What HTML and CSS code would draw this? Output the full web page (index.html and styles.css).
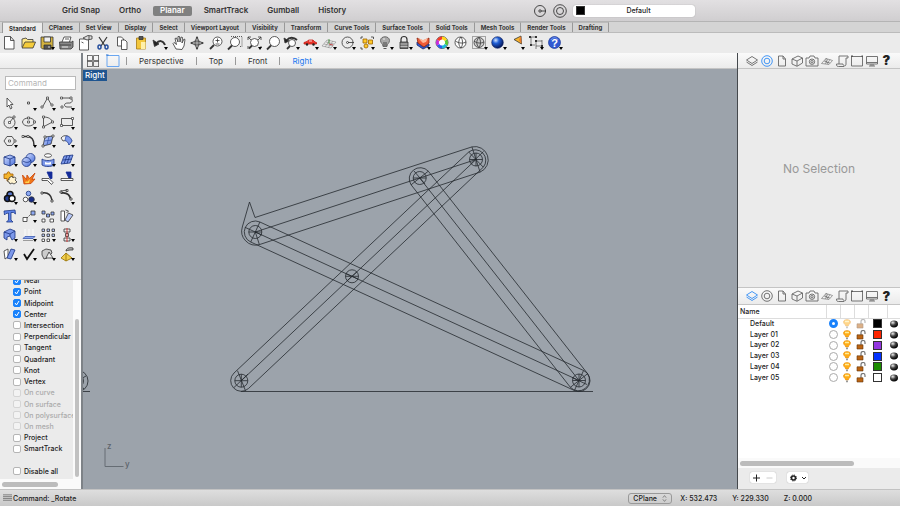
FILE: index.html
```html
<!DOCTYPE html>
<html lang="en">

<head>
    <meta charset="UTF-8">
    <meta name="viewport" content="width=device-width, initial-scale=1.0">
    <title>Right</title>
    <link rel="stylesheet" href="styles.css">
</head>

<body>
    <!-- shared icons -->
    <svg class="sprite" aria-hidden="true">
        <defs>
            <linearGradient id="blue" x1="0" y1="0" x2="1" y2="1">
                <stop offset="0" stop-color="#d3dfff" />
                <stop offset="1" stop-color="#4a70dc" />
            </linearGradient>
            <radialGradient id="ball" cx=".35" cy=".3" r=".7">
                <stop offset="0" stop-color="#d5e6ff" />
                <stop offset=".4" stop-color="#2160d8" />
                <stop offset="1" stop-color="#06195c" />
            </radialGradient>
            <radialGradient id="black" cx=".35" cy=".3" r=".7">
                <stop offset="0" stop-color="#eee" />
                <stop offset=".5" stop-color="#444" />
                <stop offset="1" stop-color="#000" />
            </radialGradient>
        </defs>
        <symbol id="layers" viewBox="0 0 14 14">
            <path d="M1.500 6L7 2.500 12.500 6 7 9.500z M1.500 8L7 11.500 12.500 8" />
        </symbol>
        <symbol id="rings" viewBox="0 0 14 14">
            <circle cx="7" cy="7" r="5.300" />
            <circle cx="7" cy="7" r="2.800" />
        </symbol>
        <symbol id="page" viewBox="0 0 14 14">
            <path d="M3.500 2h4.500l2.500 3v7h-7z M8 2v3h2.500" />
        </symbol>
        <symbol id="cube" viewBox="0 0 14 14">
            <path d="M2 5l6-3 4.500 2v5L7 12.300 2 10z M2 5l5 2 5.500-3 M7 7v5" />
        </symbol>
        <symbol id="camera" viewBox="0 0 14 14">
            <path d="M1 4h3l1-2h4l1 2h3v8H1z" />
            <circle cx="7" cy="7.700" r="2.700" />
            <circle cx="7" cy="7.700" r="1.200" />
        </symbol>
        <symbol id="plane" viewBox="0 0 14 14">
            <path d="M1.500 9.500L6 4.500l6.500 2L9 10.500z M4 7l6 2 M8 5l-3 5 M10 5.500L7 10 M6 4v4l3 1" stroke-width=".6" />
        </symbol>
        <symbol id="scroll" viewBox="0 0 14 14">
            <path d="M4 10V2h9v2h-2v6c0 3-3 2-3 0H1.500c0 2 .5 2.500 2 2.500H9" />
        </symbol>
        <symbol id="frame" viewBox="0 0 14 14">
            <path d="M1.500 2.500h11v9.500h-11z" />
            <path d="M1 1.500h2v1.500H1z M11.500 1.500H13v1.500h-1.500z" fill="#555" stroke="none" />
        </symbol>
        <symbol id="monitor" viewBox="0 0 14 14">
            <path d="M1.500 2.500h11v7.500h-11z M1.500 8.500h11 M4 12h6 M6 10v2 M8 10v2" />
        </symbol>
        <symbol id="bulb" viewBox="0 0 10 10">
            <path d="M1.500 3C1.500-.2 8.500-.2 8.500 3 8.500 5 6.500 5 6.300 7H3.700C3.500 5 1.500 5 1.500 3z" fill="#ffac16" stroke="#e78b0a" stroke-width=".6" />
            <path d="M3 2.500h4" stroke="#ffed9b" stroke-width="1.500" />
            <path d="M4 7.500h2v1.800H4z" fill="#999" stroke="none" />
        </symbol>
        <symbol id="lock" viewBox="0 0 10 10">
            <path d="M5 5V2.500C5-.2 9-.2 9 2.500V4" stroke="#777" stroke-width="1.200" />
            <path d="M1 4.800h6v4.200H1z" fill="#bb6412" stroke="#62330a" stroke-width=".6" />
        </symbol>
        <symbol id="sphere" viewBox="0 0 10 10">
            <ellipse cx="5" cy="5" rx="4" ry="3.400" fill="url(#black)" stroke="none" />
        </symbol>
    </svg>

    <header class="topbar">
        <div class="modes">
            <button>Grid Snap</button>
            <button>Ortho</button>
            <button class="active">Planar</button>
            <button>SmartTrack</button>
            <button>Gumball</button>
            <button>History</button>
        </div>
        <button class="round" aria-label="Object snap"><svg viewBox="0 0 14 14"><circle cx="7" cy="7" r="5.500" /><circle cx="7" cy="7" r="1.200" /><path d="M8 7h5" /></svg></button>
        <button class="round" aria-label="Properties"><svg viewBox="0 0 14 14"><circle cx="7" cy="7" r="6.300" /><circle cx="7" cy="7" r="3.500" /></svg></button>
        <div class="layerPick">
            <span class="swatch"></span>
            <select aria-label="Current layer">
                <option>Default</option>
            </select>
        </div>
    </header>

    <nav class="tabs">
        <button class="active">Standard</button>
        <button>CPlanes</button>
        <button>Set View</button>
        <button>Display</button>
        <button>Select</button>
        <button>Viewport Layout</button>
        <button>Visibility</button>
        <button>Transform</button>
        <button>Curve Tools</button>
        <button>Surface Tools</button>
        <button>Solid Tools</button>
        <button>Mesh Tools</button>
        <button>Render Tools</button>
        <button>Drafting</button>
    </nav>

    <div class="toolbar">
        <button aria-label="New"><svg viewBox="0 0 18 18"><path d="M4.500 2.500h6l3.500 4V15H4.500z M10.500 2.500v4H14" fill="#fff" /></svg></button>
        <button aria-label="Open"><svg viewBox="0 0 18 18"><path d="M3 13V5l4-1 1.500 1.500H14V8" fill="#ffe98a" /><path d="M3 14l3-6h10.500L14 14z" fill="#f5cc3a" /></svg></button>
        <button class="more" aria-label="Save"><svg viewBox="0 0 18 18"><path d="M3 3h12v12H4.500L3 13.500z" fill="#d4b33f" /><path d="M6 3h6.500v5H6z" fill="#eee" /><path d="M6 11h7v4H6z" fill="#555" /><path d="M11 12v2" stroke="#fff" /></svg></button>
        <button aria-label="Print"><svg viewBox="0 0 18 18"><path d="M5 8l2-5h7l-1.500 5" fill="#fff" /><path d="M2.500 8h12l1.500-1v6l-2 2H3z" fill="#888" /><path d="M3 11h11 M8 5h4" /><path d="M5 13h6" stroke="#fff" /></svg></button>
        <button aria-label="Document properties"><svg viewBox="0 0 18 18"><path d="M3.500 5h9v11h-9z" fill="#fff" /><path d="M7 4l5-2.500 4 .5v3l-5 1z" fill="#ddd" /><path d="M5.500 8l2 1 M13 2v3" /></svg></button>
        <button aria-label="Cut"><svg viewBox="0 0 18 18"><path d="M5 3l6 9 M13 3L7 12" stroke-width="1.200" /><g stroke="#254e9d" stroke-width="1.500"><ellipse cx="5.500" cy="13" rx="1.500" ry="2" /><ellipse cx="12.500" cy="13" rx="1.500" ry="2" /></g></svg></button>
        <button aria-label="Copy"><svg viewBox="0 0 18 18"><path d="M4.500 3h4l2 2v7h-6z" fill="#fff" /><path d="M8.500 6h3.500l2 2v7.500H8.500z" fill="#fff" /></svg></button>
        <button aria-label="Paste"><svg viewBox="0 0 18 18"><path d="M4.500 4h9v11h-9z" fill="#f3c73c" stroke="#a77b12" /><path d="M7 2.500h4v3H7z" fill="#555" /><path d="M9 8h4.500v7H9z" fill="#fff0aa" stroke="none" /></svg></button>
        <button class="more" aria-label="Undo"><svg viewBox="0 0 18 18"><path d="M5 10c3-4 7-4 9 1" stroke-width="2" /><path d="M2 6l1.500 6.500L8 10z" fill="#222" /></svg></button>
        <button aria-label="Pan"><svg viewBox="0 0 18 18"><path d="M6 15L3 9.500 4 8.500l2.500 2L5 4.500 6.500 4 8 8 8 2.500h1.500L10 8l1-5 1.500.5L12 9l2-4 1 .5L14 12l-2 3.500z" fill="#fff" /></svg></button>
        <button aria-label="Rotate view"><svg viewBox="0 0 18 18"><path d="M9 3v12 M3 9h12" stroke="#777" /><ellipse cx="9" cy="9" rx="4.500" ry="2" /><ellipse cx="9" cy="9" rx="2" ry="4.500" /><path d="M9 2L7.500 4.500h3z M9 16l-1.500-2.500h3z M2 9l2.500-1.500v3z M16 9l-2.500-1.500v3z" fill="#333" stroke="none" /></svg></button>
        <button aria-label="Zoom dynamic"><svg viewBox="0 0 18 18"><circle cx="10.500" cy="7.500" r="4.500" fill="#fff" /><path d="M8.500 6.500h4 M10.500 4.500v4 M8.500 10h4" /><path d="M7 11l-4 4" stroke-width="1.800" /></svg></button>
        <button aria-label="Zoom window"><svg viewBox="0 0 18 18"><path d="M5 2.500h11v10h-3" stroke-dasharray="1 1" /><circle cx="9" cy="8" r="4.500" fill="#fff" /><path d="M6 11.500l-4 4" stroke-width="1.800" /></svg></button>
        <button class="more" aria-label="Zoom extents"><svg viewBox="0 0 18 18"><circle cx="9.500" cy="8.500" r="4" fill="#fff" /><path d="M7 11.500l-3 3" stroke-width="1.800" /><path d="M3 6V3h3 M13 3h3v3 M3 12v3 M16 12v2 M3 3l3 3 M16 3l-3 3" /></svg></button>
        <button aria-label="Zoom selected"><svg viewBox="0 0 18 18"><circle cx="10.500" cy="7.500" r="5" fill="#fff" /><path d="M7 11.500l-4 4" stroke-width="1.800" /></svg></button>
        <button class="more" aria-label="Undo view"><svg viewBox="0 0 18 18"><path d="M5 6c2-3 7-3 10 0" stroke-width="1.800" /><path d="M2 4l1 5 4-2z" fill="#222" /><circle cx="10" cy="9" r="3.500" fill="#fff" /><path d="M8 12l-3 3" stroke-width="1.800" /></svg></button>
        <button class="more" aria-label="Four views"><svg viewBox="0 0 18 18"><path d="M3 10V8.500l3-1L7.500 6H12l2 2 1.500.5V10z" fill="#e8352a" stroke="#c3221a" /><path d="M8 7h3" stroke="#fff" /><circle cx="6" cy="10.500" r="1.200" fill="#222" stroke="none" /><circle cx="12.500" cy="10.500" r="1.200" fill="#222" stroke="none" /></svg></button>
        <button class="more" aria-label="Set CPlane"><svg viewBox="0 0 18 18"><g stroke="#888" stroke-width=".6"><path d="M2 12l5-6 9 2-5 6z M4 10l9 2 M6 8l8 2 M5 13l5-7 M8 14l5-7" /></g><path d="M9 5v5" stroke="#3a8b31" /><path d="M9 10l4 1" stroke="#b22" /></svg></button>
        <button class="more" aria-label="Object snap"><svg viewBox="0 0 18 18"><circle cx="8.500" cy="8.500" r="5.500" /><circle cx="8.500" cy="8.500" r="1" /><path d="M9 8.500h6" /></svg></button>
        <button class="more" aria-label="Select"><svg viewBox="0 0 18 18"><path d="M3 5V3h2 M13 3h2.500v2 M3 13v2h2" /><g fill="#ffc828" stroke="#9c6500"><path d="M5 5h4v4H5z M10.500 6h4v4h-4z" /><circle cx="8" cy="12" r="2" /></g></svg></button>
        <button class="more" aria-label="Hide"><svg viewBox="0 0 18 18"><path d="M4.500 6.500c0-5 9-5 9 0 0 3-2.500 3-2.500 6H7c0-3-2.500-3-2.500-6z" fill="#aaa" stroke="#555" /><path d="M8 8v4 M10 8v4 M7.500 14.500h3" /><path d="M7 5h2" stroke="#fff" /></svg></button>
        <button class="more" aria-label="Lock"><svg viewBox="0 0 18 18"><path d="M6 8V5.500c0-4 6-4 6 0V8" stroke-width="1.200" /><path d="M5 8h8v6.500H5z" fill="#777" /><path d="M5.500 10h7 M5.500 12.500h7" stroke="#ccc" /></svg></button>
        <button class="more" aria-label="Layers"><svg viewBox="0 0 18 18"><path d="M3 8l6 5 6-3v2l-6 3-6-4z" fill="#3159d2" stroke="#14286e" /><path d="M3 4l6 3 6-3v5l-5 4-6-4z" fill="#ef5b37" stroke="#8c2410" /><path d="M4 4l5 2 5-2-2 4-3 1z" fill="#ffb899" stroke="none" /></svg></button>
        <button class="more" aria-label="Object color"><svg viewBox="0 0 18 18"><circle cx="9" cy="8.500" r="6" fill="#fff" /><g stroke-width="2.800"><path d="M9 4a4.500 4.500 0 0 1 3.900 2.200" stroke="#ffd51c" /><path d="M12.900 6.200a4.500 4.500 0 0 1 0 4.600" stroke="#58c934" /><path d="M12.900 10.800A4.500 4.500 0 0 1 9 13" stroke="#18b9d5" /><path d="M9 13a4.500 4.500 0 0 1-3.900-2.200" stroke="#275cf2" /><path d="M5.100 10.800a4.500 4.500 0 0 1 0-4.600" stroke="#c92bde" /><path d="M5.100 6.200A4.500 4.500 0 0 1 9 4" stroke="#f33a2a" /></g></svg></button>
        <button aria-label="Shade"><svg viewBox="0 0 18 18"><circle cx="8.500" cy="8.500" r="5.500" fill="#fff" /><path d="M9 3c-3 3-3 8 0 11 M3.500 7c3 2.500 8 2.500 10.500 1 M9 3c2 3 2 8 0 11" /></svg></button>
        <button class="more" aria-label="Shade options"><svg viewBox="0 0 18 18"><path d="M2.500 2.500h13v12h-13z" stroke-dasharray="1 1" /><circle cx="9" cy="8.500" r="5" fill="#ccc" /><path d="M9 3.500c-3 3-3 7 0 10 M4 7c3 2.500 7 2.500 10 1 M9 3.500c2 3 2 7 0 10" /></svg></button>
        <button class="more" aria-label="Render"><svg viewBox="0 0 18 18"><circle cx="8.500" cy="8.500" r="5.800" fill="url(#ball)" stroke="#071858" stroke-width=".6" /></svg></button>
        <button class="more" aria-label="Spotlight"><svg viewBox="0 0 18 18"><path d="M6 5.500L13 2l.5 8z" fill="#f7b52c" /><path d="M11 6l2-4 .5 8z" fill="#e9782b" stroke="none" /></svg></button>
        <button class="more" aria-label="Dimension"><svg viewBox="0 0 18 18"><path d="M3 3h6 M4 3v8 M3 11h5 M8 7h7 M9 7v8 M9 12h6 M15 6v7" stroke-width=".6" /><path d="M2 2h2v2H2z M8 2h2v2H8z M3 10h2v2H3z M8 6h2v2H8z M14 11h2v2h-2z" fill="#333" stroke="none" /></svg></button>
        <button class="more" aria-label="Help"><svg viewBox="0 0 18 18"><circle cx="8.500" cy="8.500" r="6" fill="#3159d2" stroke="#183797" stroke-width=".7" /><path d="M5 6c1-3 6-3 7 0" stroke="#8ca9f5" /><text x="8.500" y="12.500" class="q">?</text></svg></button>
    </div>

    <main>
        <aside class="sidebar">
            <div class="strip"></div>
            <input class="command" type="text" placeholder="Command" aria-label="Command">
            <div class="palette">
                <button aria-label="Select"><svg viewBox="0 0 18 18"><path d="M6 4v9l2-2 1.500 4 1.500-1-1.500-3.500H12z" fill="#fff" /></svg></button>
                <button class="more" aria-label="Point"><svg viewBox="0 0 18 18"><path d="M7.500 8h2v2h-2z" fill="#fff" /></svg></button>
                <button class="more" aria-label="Polyline"><svg viewBox="0 0 18 18"><path d="M3.500 13l5-9 4 7" /><g class="pt"><path d="M2 12h2v2H2z M7.500 3h2v2h-2z M12 10h2v2h-2z" /></g></svg></button>
                <button class="more" aria-label="Curve"><svg viewBox="0 0 18 18"><path d="M4 4h7c5 0 4 6-1 5-5 0-4 4-1 4h5" /><g class="pt"><path d="M2.500 3h2v2h-2z M12 3h2v2h-2z M3 12h2v2H3z" /></g></svg></button>

                <button class="more" aria-label="Circle"><svg viewBox="0 0 18 18"><circle cx="8.500" cy="9.500" r="5.500" /><path d="M8.500 9.500l4-5" /><g class="pt"><path d="M7.500 8.500h2v2h-2z M12 3h2v2h-2z" /></g></svg></button>
                <button class="more" aria-label="Ellipse"><svg viewBox="0 0 18 18"><ellipse cx="8.500" cy="9" rx="6" ry="4" /><g class="pt"><path d="M7.500 8h2v2h-2z M7.500 4h2v2h-2z M13.500 8h2v2h-2z" /></g></svg></button>
                <button class="more" aria-label="Arc"><svg viewBox="0 0 18 18"><path d="M4.500 4c5 0 8 2 9 5L4 14" /><path d="M4.500 4v10" /><g class="pt"><path d="M3.500 3h2v2h-2z M3.500 13h2v2h-2z M12.500 8h2v2h-2z" /></g></svg></button>
                <button class="more" aria-label="Rectangle"><svg viewBox="0 0 18 18"><path d="M3.500 5.500h11v7h-11z" /><g class="pt"><path d="M2.500 11.500h2v2h-2z M13.500 4.500h2v2h-2z" /></g></svg></button>

                <button class="more" aria-label="Polygon"><svg viewBox="0 0 18 18"><path d="M6 4.500h5l3 4.500-3 4.500H6L3 9z" /><g class="pt"><path d="M7.500 8h2v2h-2z M13 8h2v2h-2z" /></g></svg></button>
                <button class="more" aria-label="Fillet"><svg viewBox="0 0 18 18"><path d="M3 4.500h4c5 0 7 3 7 9" stroke-width="1.500" /><g class="pt"><path d="M2 3.500h2v2H2z M7 3.500h2v2H7z" /></g></svg></button>
                <button class="more" aria-label="Surface from points"><svg viewBox="0 0 18 18"><path d="M6 5l8-1-2 8-8 2z" fill="url(#blue)" /><path d="M5 9l8-1 M10 4.500L8 13" stroke="#3858ae" /><g class="pt"><path d="M5 4h2v2H5z M13 3h2v2h-2z M3 13h2v2H3z" /></g></svg></button>
                <button class="more" aria-label="Surface"><svg viewBox="0 0 18 18"><path d="M3 6c3-4 9-3 11 3l-3 4C10 9 8 8 5 9z" fill="#f2f2f2" /><path d="M8 4c3 0 5 2 6 5l-3 4C10 10 9 9 7 8.500z" fill="#7c98ea" stroke="#3858ae" /></svg></button>

                <button class="more" aria-label="Box"><svg viewBox="0 0 18 18"><path d="M3 6l6-2 5 2v6l-5 3-6-2z" fill="url(#blue)" stroke="#193481" /><path d="M3 6l6 2 5-2 M9 8v7" stroke="#193481" /></svg></button>
                <button class="more" aria-label="Spheres"><svg viewBox="0 0 18 18"><g stroke="#193481"><circle cx="10.500" cy="7" r="4.500" fill="url(#blue)" /><circle cx="6.500" cy="11" r="4.500" fill="url(#blue)" /><path d="M3 10c3 2 6 2 8-1" /></g></svg></button>
                <button class="more" aria-label="Extrude"><svg viewBox="0 0 18 18"><ellipse cx="9" cy="4.500" rx="3.500" ry="1.800" fill="#fff" /><path d="M3 8c3 2 9 2 12 0v6c-3 2-9 2-12 0z" fill="#7c98ea" stroke="#193481" /><path d="M6 11c2 1 4 1 6 0v2.500H6z" fill="#fff" stroke="none" /></svg></button>
                <button class="more" aria-label="Mesh"><svg viewBox="0 0 18 18"><path d="M6 5l9-1-3 8-9 1z" fill="#7c98ea" stroke="#193481" /><path d="M5 9l9-1 M9 4.500L6 13 M12 4L9 12.500" stroke="#193481" /></svg></button>

                <button aria-label="Plugins"><svg viewBox="0 0 18 18"><path d="M3 5h3c0-3 3-3 3 0h3v4H9v3H6V9.500H3z" fill="#f4b52e" stroke="#a25b00" /><path d="M8 9l3-2 1 2c2-2 4 0 2 2l2 2-3 2-2-1-2 1-1-2c-2 0-2-3 0-2z" fill="#fff3d0" /></svg></button>
                <button aria-label="Explode"><svg viewBox="0 0 18 18"><path d="M4 15L2.500 6l4 4.500L7 6l2.500 3.500L15 4l-3 6.500 3-.5-4 4.500z" fill="#f17719" stroke="#c94408" /><path d="M5 14l1-2 1 1 3-3-1 4z" fill="#ffd34d" stroke="none" /></svg></button>
                <button aria-label="Trim"><svg viewBox="0 0 18 18"><path d="M8 3h5v6.500h-2z" fill="#142c99" stroke="#142c99" /><path d="M3 9.500h7l4 4-1.500 2-4-4H3z" fill="#fff" /></svg></button>
                <button aria-label="Split"><svg viewBox="0 0 18 18"><path d="M8 3h5v6.500h-2z" fill="#142c99" stroke="#142c99" /><path d="M3 9.500h12v2H3z" fill="#fff" /></svg></button>

                <button class="more" aria-label="Union"><svg viewBox="0 0 18 18"><g stroke="#111" stroke-width="1.500"><circle cx="9" cy="6.500" r="3" fill="#5877ce" /><circle cx="6.500" cy="10.500" r="3" fill="#223c91" /><circle cx="11" cy="10.500" r="3" fill="#fff" /></g></svg></button>
                <button class="more" aria-label="Group"><svg viewBox="0 0 18 18"><circle cx="8.500" cy="5.500" r="2.300" fill="#8daaf2" stroke="#193481" /><circle cx="5.500" cy="11.500" r="2.300" fill="#fff" /><circle cx="11.500" cy="11.500" r="2.800" fill="#172c86" /></svg></button>
                <button aria-label="Edit points"><svg viewBox="0 0 18 18"><path d="M3 5c6-1 9 2 10 7" stroke-width="1.500" /><path d="M2 4h2v2H2z M12 12h2v2h-2z" fill="#fff" /></svg></button>
                <button class="more" aria-label="Control points"><svg viewBox="0 0 18 18"><path d="M3 5c6-1 9 2 10 7" stroke-width="1.800" /><path d="M3 3l6-1 M2 3h2v2H2z M8 1.500h2v2H8z M12 10h2v2h-2z" fill="#fff" /></svg></button>

                <button aria-label="Text"><svg viewBox="0 0 18 18"><path d="M3 4l11-1 .5 4-2-1.500h-2.500V13l2 2H5.500l2-2V6L5 6.500 3.500 8z" fill="#5d83e8" stroke="#1d3887" /></svg></button>
                <button class="more" aria-label="Move"><svg viewBox="0 0 18 18"><path d="M7 11l5-5" stroke-dasharray="2 1" /><path d="M3 10.500h4v4H3z" fill="#fff" /><path d="M11 4h4v4h-4z" fill="#8da8f2" /></svg></button>
                <button aria-label="Array copies"><svg viewBox="0 0 18 18"><path d="M3 4h3v3H3z M7.500 7h3v3h-3z M12 5h3v3h-3z" fill="#8da8f2" /><path d="M3 12h3v3H3z M11 12h3.500v3H11z" fill="#fff" /></svg></button>
                <button aria-label="Rotate"><svg viewBox="0 0 18 18"><path d="M3 4h3.500v10H3z" fill="#fff" /><path d="M10.500 6l4.500 2-5 7-3-2z" fill="#b9cafa" /><path d="M7.500 3l3 1-2 2" /></svg></button>

                <button class="more" aria-label="Boolean"><svg viewBox="0 0 18 18"><path d="M3 6l6-3 5 2v7l-3 2-2-4-3 1v3l-3-2z" fill="#7c98ea" stroke="#193481" /><path d="M3 6l6 2 5-3 M9 8v2" stroke="#193481" /></svg></button>
                <button class="more" aria-label="Project"><svg viewBox="0 0 18 18"><g stroke="#fff"><path d="M5 3v7 M9 3v7 M13 3v7" /></g><path d="M3 12.500l2-2h10l-2 2z" fill="#8da8f2" stroke="#3858ae" /><path d="M3 14.500h10" stroke="#888" /></svg></button>
                <button class="more" aria-label="Array"><svg viewBox="0 0 18 18"><path d="M3 3h2.500v2.500H3z M8 3h2.500v2.500H8z M13 3h2.500v2.500H13z M3 8h2.500v2.500H3z M8 8h2.500v2.500H8z M13 8h2.500v2.500H13z" fill="#b9cafa" /><path d="M3 13h2.500v2.500H3z M8 13h2.500v2.500H8z" fill="#fff" /></svg></button>
                <button class="more" aria-label="Align"><svg viewBox="0 0 18 18"><path d="M6 3h6v3H6z M7.500 7.500h3v3h-3z M6 12h6v3H6z" fill="#eee" /><path d="M9 2v14" stroke="#df1e1e" /></svg></button>

                <button class="more" aria-label="Orient"><svg viewBox="0 0 18 18"><path d="M3 6l4-2v8l-3 2z" fill="#fff" /><path d="M10 4l4 1-4 9-4-1z" fill="#7c98ea" stroke="#193481" /></svg></button>
                <button class="more" aria-label="Check"><svg viewBox="0 0 18 18"><path d="M4 9l3 5 7-10" stroke="#111" stroke-width="1.800" /></svg></button>
                <button class="more" aria-label="Primitives"><svg viewBox="0 0 18 18"><path d="M3 10V6l4-2 5 1 1 3-5 5-3 1z" fill="#ccc" /><path d="M10 7l4 6H7z" fill="#eee" /></svg></button>
                <button class="more" aria-label="Pyramid"><svg viewBox="0 0 18 18"><path d="M8 8l6 5-6 3-5-3z" fill="#f1ce4c" stroke="#957000" /><path d="M8 8v8" stroke="#957000" /><path d="M8 6c0-3 4-4 7-3v2c-3 0-5 0-7 1z" fill="#aaa" /></svg></button>
            </div>
            <div class="snaps">
                <div class="snapList">
                    <label><input type="checkbox" checked>Near</label>
                    <label><input type="checkbox" checked>Point</label>
                    <label><input type="checkbox" checked>Midpoint</label>
                    <label><input type="checkbox" checked>Center</label>
                    <label><input type="checkbox">Intersection</label>
                    <label><input type="checkbox">Perpendicular</label>
                    <label><input type="checkbox">Tangent</label>
                    <label><input type="checkbox">Quadrant</label>
                    <label><input type="checkbox">Knot</label>
                    <label><input type="checkbox">Vertex</label>
                    <label class="off"><input type="checkbox" disabled>On curve</label>
                    <label class="off"><input type="checkbox" disabled>On surface</label>
                    <label class="off"><input type="checkbox" disabled>On polysurface</label>
                    <label class="off"><input type="checkbox" disabled>On mesh</label>
                    <label><input type="checkbox">Project</label>
                    <label><input type="checkbox">SmartTrack</label>
                    <span></span>
                    <label><input type="checkbox">Disable all</label>
                </div>
                <div class="vscroll"><i></i></div>
            </div>
            <div class="hscroll"><i></i></div>
        </aside>

        <section class="viewport">
            <nav class="strip views">
                <button aria-label="Four viewports"><svg viewBox="0 0 14 14"><path d="M1 1.500h5.500v5H1 M13 1.500H7.500v5H13 M1 12.500h5.500v-5H1 M13 12.500H7.500v-5H13 M1.500 1v12 M12.500 1v12" stroke-width=".8" /></svg></button>
                <button class="on" aria-label="Single viewport"><svg viewBox="0 0 14 14"><path d="M1 1.500h12v11H1z" /><path d="M0 1h2.500" stroke="#256fd0" /></svg></button>
                <a href="#">Perspective</a>
                <a href="#">Top</a>
                <a href="#">Front</a>
                <a href="#" class="active">Right</a>
            </nav>
            <div class="canvas">
                <span class="title">Right</span>
                <svg class="drawing" viewBox="83 69 654 420">
                    <!-- previous copy, cut by the edge -->
                    <circle cx="77" cy="381" r="11" />
                    <circle cx="77" cy="381" r="6.500" />
                    <path d="M77 381l9-5 M77 381l7 8 M83 391.500h7" />

                    <!-- ground -->
                    <path d="M241 391.500h352" />

                    <!-- bar E-B -->
                    <path d="M234 373L468.700 152 M241.300 380.700L476 159.500 M248.600 388.400L483.300 167.200" />
                    <path d="M234 373A10.600 10.600 0 0 0 248.600 388.400 M468.700 152A10.600 10.600 0 0 1 483.300 167.200" />

                    <!-- bar A-B -->
                    <path d="M255 217.500L471.900 146.900 M255.300 232L476 159.500 M259.400 244.600L480.100 172.100" />
                    <path d="M471.900 146.900A13.300 13.300 0 0 1 480.100 172.100 M242.300 227A14 14 0 0 0 259.400 244.600" />
                    <path d="M242.300 227L249.500 202 255 217.500" />

                    <!-- bar A-F -->
                    <path d="M259.900 222L583.600 370.500 M255.300 232L579 380.500 M250.700 242L574.400 390.500" />
                    <path d="M259.900 222A11 11 0 0 0 250.700 242 M583.600 370.500A11 11 0 0 1 574.400 390.500" />

                    <!-- bar C-F -->
                    <path d="M428.300 171.200L587.600 373.700 M419.700 178L579 380.500 M411.100 184.800L570.400 387.300" />
                    <path d="M428.300 171.200A11 11 0 0 0 411.100 184.800 M587.600 373.700A11 11 0 0 1 570.400 387.300" />

                    <!-- pins -->
                    <circle cx="255.300" cy="232" r="6.500" />
                    <circle cx="476" cy="159.500" r="6.500" />
                    <circle cx="419.700" cy="178" r="6.500" />
                    <circle cx="352" cy="276.300" r="6.500" />
                    <circle cx="241.300" cy="380.700" r="6.500" />
                    <circle cx="579" cy="380.500" r="6.500" />
                    <path d="M259.400 244.600l-4.100-12.600 M245 227.300l16.800 7.700 M259.900 222l-9.200 20 M248.800 232h13" />
                    <path d="M471.900 146.900l8.200 25.200 M468.700 152l14.600 15.200 M476 153v13 M469.500 159.500h13 M471 163.500l12.500-12" />
                    <path d="M428.300 171.200l-17.200 13.600 M413.200 178h13 M414 171l11 13" />
                    <path d="M345.500 276.300h13 M347 280.800l10-9 M346 273.600l12 5.500" />
                    <path d="M237.500 370.700l8 20 M234.800 380.700h13 M241.300 374.200v13 M234 387.500l14-13.500" />
                    <path d="M583.600 370.500l-9.200 20 M587.600 373.700l-17.200 13.600 M579 374v13 M572.500 380.500h13 M572 377.500l15 7" />

                    <g class="axis">
                        <path d="M105 448v18.500h18.500" />
                        <text x="107" y="449">z</text>
                        <text x="125" y="467">y</text>
                    </g>
                </svg>
            </div>
        </section>

        <aside class="panels">
            <nav class="strip icons">
                <button aria-label="Layers"><svg><use href="#layers" /></svg></button>
                <button class="on" aria-label="Properties"><svg><use href="#rings" /></svg></button>
                <button aria-label="Notes"><svg><use href="#page" /></svg></button>
                <button aria-label="Blocks"><svg><use href="#cube" /></svg></button>
                <button aria-label="Named views"><svg><use href="#camera" /></svg></button>
                <button aria-label="Named CPlanes"><svg><use href="#plane" /></svg></button>
                <button aria-label="History"><svg><use href="#scroll" /></svg></button>
                <button aria-label="Viewport"><svg><use href="#frame" /></svg></button>
                <button aria-label="Display"><svg><use href="#monitor" /></svg></button>
                <button class="help">?</button>
            </nav>
            <div class="empty">No Selection</div>
            <nav class="strip icons second">
                <button class="on" aria-label="Layers"><svg><use href="#layers" /></svg></button>
                <button aria-label="Properties"><svg><use href="#rings" /></svg></button>
                <button aria-label="Notes"><svg><use href="#page" /></svg></button>
                <button aria-label="Blocks"><svg><use href="#cube" /></svg></button>
                <button aria-label="Named views"><svg><use href="#camera" /></svg></button>
                <button aria-label="Named CPlanes"><svg><use href="#plane" /></svg></button>
                <button aria-label="History"><svg><use href="#scroll" /></svg></button>
                <button aria-label="Viewport"><svg><use href="#frame" /></svg></button>
                <button aria-label="Display"><svg><use href="#monitor" /></svg></button>
                <button class="help">?</button>
            </nav>
            <div class="layers">
                <table>
                    <thead>
                        <tr>
                            <th class="name">Name</th>
                            <th class="narrow"></th>
                            <th class="narrow"></th>
                            <th class="narrow"></th>
                            <th class="wide"></th>
                            <th class="narrow"></th>
                        </tr>
                    </thead>
                    <tbody>
                        <tr class="current">
                            <td class="name">Default</td>
                            <td><input type="radio" name="layer" aria-label="Default" checked></td>
                            <td><svg><use href="#bulb" /></svg></td>
                            <td><svg><use href="#lock" /></svg></td>
                            <td><span class="swatch"></span></td>
                            <td><svg><use href="#sphere" /></svg></td>
                        </tr>
                        <tr>
                            <td class="name">Layer 01</td>
                            <td><input type="radio" name="layer" aria-label="Layer 01"></td>
                            <td><svg><use href="#bulb" /></svg></td>
                            <td><svg><use href="#lock" /></svg></td>
                            <td><span class="swatch red"></span></td>
                            <td><svg><use href="#sphere" /></svg></td>
                        </tr>
                        <tr>
                            <td class="name">Layer 02</td>
                            <td><input type="radio" name="layer" aria-label="Layer 02"></td>
                            <td><svg><use href="#bulb" /></svg></td>
                            <td><svg><use href="#lock" /></svg></td>
                            <td><span class="swatch purple"></span></td>
                            <td><svg><use href="#sphere" /></svg></td>
                        </tr>
                        <tr>
                            <td class="name">Layer 03</td>
                            <td><input type="radio" name="layer" aria-label="Layer 03"></td>
                            <td><svg><use href="#bulb" /></svg></td>
                            <td><svg><use href="#lock" /></svg></td>
                            <td><span class="swatch blue"></span></td>
                            <td><svg><use href="#sphere" /></svg></td>
                        </tr>
                        <tr>
                            <td class="name">Layer 04</td>
                            <td><input type="radio" name="layer" aria-label="Layer 04"></td>
                            <td><svg><use href="#bulb" /></svg></td>
                            <td><svg><use href="#lock" /></svg></td>
                            <td><span class="swatch green"></span></td>
                            <td><svg><use href="#sphere" /></svg></td>
                        </tr>
                        <tr>
                            <td class="name">Layer 05</td>
                            <td><input type="radio" name="layer" aria-label="Layer 05"></td>
                            <td><svg><use href="#bulb" /></svg></td>
                            <td><svg><use href="#lock" /></svg></td>
                            <td><span class="swatch white"></span></td>
                            <td><svg><use href="#sphere" /></svg></td>
                        </tr>
                    </tbody>
                </table>
            </div>
            <div class="hscroll"><i></i></div>
            <div class="actions">
                <div class="pair">
                    <button aria-label="Add layer"><svg viewBox="0 0 12 10"><path d="M2.500 5h7 M6 1.500v7" /></svg></button>
                    <button aria-label="Remove layer" disabled><svg viewBox="0 0 12 10"><path d="M3 5h6" /></svg></button>
                </div>
                <button class="gear" aria-label="Layer options"><svg viewBox="0 0 20 10"><circle cx="6" cy="5" r="2" stroke-width="1.600" /><circle cx="6" cy="5" r="3" stroke-dasharray="1.200 1.150" /><path d="M14.500 4l2 2 2-2" /></svg></button>
            </div>
        </aside>
    </main>

    <footer class="status">
        <svg class="grip" viewBox="0 0 10 8"><path d="M0 .5h10 M0 2.500h10 M0 4.500h10 M0 6.500h10" /></svg>
        <span class="prompt">Command: _Rotate</span>
        <div class="cplane">
            <select aria-label="Coordinates">
                <option>CPlane</option>
            </select>
            <svg viewBox="0 0 6 10"><path d="M1 4l2-2.500L5 4 M1 6l2 2.500L5 6" /></svg>
        </div>
        <span class="coord">X: 532.473</span>
        <span class="coord">Y: 229.330</span>
        <span class="coord">Z: 0.000</span>
    </footer>
</body>

</html>
```

FILE: styles.css
```css
* {
    box-sizing: border-box;
    padding: 0;
    margin: 0;
}

body {
    display: flex;
    flex-direction: column;
    height: 100vh;
    overflow: hidden;
    font: 500 7px/11px Inter, "Liberation Sans", sans-serif;
    color: #222;
    background: #ebebeb;
}

button,
input,
select {
    font: inherit;
    color: inherit;
    border: 0;
    background: none;
    appearance: none;
}

button {
    display: flex;
    align-items: center;
    justify-content: center;
}

a {
    color: inherit;
    text-decoration: none;
}

svg {
    display: block;
    fill: none;
    stroke: #222;
}

.sprite {
    position: absolute;
    width: 0;
    height: 0;
}

/* top bar */
.topbar {
    display: flex;
    align-items: center;
    height: 22px;
    padding-left: 55px;
    background: linear-gradient(#e2e0e2, #d0ced0);
    border-bottom: 1px solid #b4b4b4;
    font-size: 8px;
    font-weight: 600;
}

.modes {
    display: flex;
    gap: 5px;
    width: 480px;
}

.modes button {
    height: 10px;
    padding: 0 7px;
    border-radius: 2px;
    color: #333;
}

.modes .active {
    color: #fff;
    background: #808080;
}

.round {
    width: 20px;
    margin-left: -5px;
}

.round + .round {
    margin-left: 0;
}

.round svg {
    width: 14px;
    height: 14px;
    stroke-width: .8;
}

.layerPick {
    display: flex;
    align-items: center;
    width: 122px;
    height: 12px;
    margin-left: 3px;
    padding-left: 3px;
    background: #fff;
    border-radius: 3px;
    box-shadow: 0 0 1px #888;
}

.layerPick select {
    flex: 1;
    padding-right: 3px;
    font-size: 7px;
    font-weight: 500;
    text-align: center;
    text-align-last: center;
}

.swatch {
    display: block;
    width: 9px;
    height: 9px;
    background: #000;
    border: 1px solid #333;
}

/* tool tabs */
.tabs {
    display: flex;
    height: 11px;
    padding-left: 2px;
    background: #d4d4d4;
    border-bottom: 1px solid #bbb;
    font-size: 6px;
    font-weight: 700;
}

.tabs button {
    padding: 0 6px;
    color: #333;
    border-right: 1px solid #999;
    border-top: 1px solid #bbb;
}

.tabs .active {
    height: 11px;
    background: #ebebeb;
    border-left: 1px solid #999;
}

.toolbar {
    display: grid;
    grid-template-columns: repeat(30, 1fr);
    align-items: center;
    width: 564px;
    height: 20px;
}

.toolbar svg,
.palette svg {
    width: 18px;
    height: 18px;
    stroke: #333;
    stroke-width: .8;
}

.toolbar button,
.palette button {
    position: relative;
}

.more::after {
    content: "";
    position: absolute;
    right: 1px;
    bottom: 2px;
    border: 2px solid transparent;
    border-top: 3px solid #000;
    border-bottom: 0;
}

.q {
    font: bold 11px "Liberation Sans", sans-serif;
    text-anchor: middle;
    fill: #fff;
    stroke: none;
}

.pt {
    fill: #fff;
    stroke-width: .7;
}

main {
    display: flex;
    flex: 1;
    min-height: 0;
}

.strip {
    flex: none;
    height: 16px;
    background: linear-gradient(#fafafa, #ebebeb);
    border-bottom: 1px solid #c4c4c4;
}

/* left side */
.sidebar {
    display: flex;
    flex-direction: column;
    flex: none;
    width: 83px;
    border-right: 2px solid #7d8287;
}

.command {
    height: 14px;
    margin: 7px 5px 4px;
    padding: 0 2px;
    font-size: 8px;
    font-weight: 400;
    background: #fff;
    border: 1px solid #b9b9b9;
}

.command::placeholder {
    color: #b5b5b5;
}

.palette {
    display: grid;
    grid-template-columns: repeat(4, 19px);
    grid-template-rows: repeat(9, 1fr);
    height: 169px;
    margin-bottom: 16px;
}

.snaps {
    display: flex;
    flex: 1;
    min-height: 0;
    overflow: hidden;
    border-top: 1px solid #c8c8c8;
}

.snapList {
    display: grid;
    flex: 1;
    grid-template-rows: repeat(18, 1fr);
    align-self: flex-end;
    min-width: 0;
    height: 204px;
    padding-bottom: 2px;
    overflow: hidden;
    white-space: nowrap;
}

.snapList label {
    display: flex;
    align-items: center;
    padding-left: 13px;
}

.snapList .off {
    color: #aaa;
}

.snapList input {
    flex: none;
    width: 8px;
    height: 8px;
    margin-right: 3px;
    background: #fff;
    border: 1px solid #b5b5b5;
    border-radius: 2px;
}

.snapList input:disabled {
    background: #f3f3f3;
    border-color: #d5d5d5;
}

.snapList input:checked {
    background: #1a82fb url("data:image/svg+xml,%3Csvg xmlns='http://www.w3.org/2000/svg' viewBox='0 0 8 8'%3E%3Cpath d='M2 4l1.500 2 2.500-4' fill='none' stroke='white'/%3E%3C/svg%3E") center / 8px 8px;
    border-color: #1a82fb;
}

.vscroll {
    display: flex;
    flex: none;
    align-items: flex-end;
    width: 8px;
    padding: 0 2px 2px;
    background: #fafafa;
}

.vscroll i {
    width: 5px;
    height: 80%;
    background: #c1c1c1;
    border-radius: 3px;
}

.hscroll {
    display: flex;
    flex: none;
    align-items: center;
    height: 10px;
    padding-left: 2px;
    background: #fafafa;
}

.hscroll i {
    width: 71%;
    height: 5px;
    background: #bcbcbc;
    border-radius: 3px;
}

/* viewport */
.viewport {
    display: flex;
    flex: 1;
    flex-direction: column;
    min-width: 0;
}

.views {
    display: flex;
    align-items: center;
    padding-left: 3px;
    font-size: 8px;
    font-weight: 400;
    color: #333;
}

.views button {
    width: 14px;
    margin-right: 6px;
}

.views svg {
    width: 14px;
    height: 14px;
    stroke: #555;
}

.views .on svg {
    stroke: #6aa6f0;
}

.views a {
    padding: 0 12px;
    line-height: 8px;
    border-left: 1px solid #999;
}

.views .active {
    color: #1a78f0;
}

.canvas {
    position: relative;
    flex: 1;
    min-height: 0;
    background: #9ca3ab;
}

.title {
    position: absolute;
    top: 1px;
    left: 0;
    padding: 0 2px;
    font-size: 8px;
    color: #fff;
    background: #1f5590;
}

.drawing {
    width: 100%;
    height: 100%;
    stroke: #23282d;
    stroke-width: .8;
}

.axis {
    stroke: #666d74;
    stroke-width: 1;
}

.axis text {
    font-size: 8px;
    fill: #5d646b;
    stroke: none;
}

/* right side */
.panels {
    display: flex;
    flex: none;
    flex-direction: column;
    width: 163px;
    border-left: 1px solid #44484c;
}

.icons {
    display: flex;
    align-items: center;
    padding-left: 6px;
}

.icons button {
    width: 15px;
}

.icons svg {
    width: 14px;
    height: 14px;
    stroke: #666;
    stroke-width: .9;
}

.icons .on svg {
    stroke: #318cf5;
}

.icons .help {
    font-size: 13px;
    font-weight: 900;
}

.second {
    height: 18px;
    border-top: 1px solid #c4c4c4;
}

.empty {
    flex: 1;
    padding-top: 92px;
    font-size: 12px;
    font-weight: 400;
    line-height: 16px;
    text-align: center;
    color: #999;
}

.layers {
    height: 153px;
    background: #fff;
    overflow: hidden;
}

.layers table {
    width: 100%;
    height: 78px;
    border-collapse: collapse;
    table-layout: fixed;
}

.layers th {
    height: 13px;
    border-right: 1px solid #ddd;
    border-bottom: 1px solid #ddd;
    font-weight: 500;
    text-align: left;
}

.layers td {
    line-height: 8px;
}

.layers .name {
    width: 88px;
}

.layers .narrow {
    width: 14px;
}

.layers .wide {
    width: 19px;
}

th.name {
    padding-left: 2px;
}

td.name {
    padding-left: 12px;
}

.layers input {
    display: block;
    width: 9px;
    height: 9px;
    margin: 0 auto;
    border: 1px solid #aaa;
    border-radius: 50%;
}

.layers input:checked {
    background: #fff;
    border: 3px solid #1a82fb;
}

.layers svg {
    width: 10px;
    height: 10px;
    margin: 0 auto;
}

.layers .swatch {
    margin: 0 auto;
}

.current svg {
    opacity: .5;
}

.current td:last-child svg {
    opacity: 1;
}

.red {
    background: #ff2600;
}

.purple {
    background: #9437e0;
}

.blue {
    background: #0433ff;
}

.green {
    background: #1c8d00;
}

.white {
    background: #fff;
}

.actions {
    display: flex;
    gap: 11px;
    height: 21px;
    padding: 4px 12px;
}

.pair {
    display: flex;
}

.pair,
.gear {
    height: 11px;
    background: #fff;
    border-radius: 2px;
    box-shadow: 0 0 1px #999;
}

.pair svg {
    width: 13px;
    height: 10px;
}

.pair button:disabled svg {
    stroke: #ccc;
}

.gear svg {
    width: 21px;
    height: 10px;
}

/* status bar */
.status {
    display: flex;
    align-items: center;
    height: 17px;
    padding: 0 88px 0 3px;
    background: linear-gradient(#dedede, #c9c9c9);
    border-top: 1px solid #c2c2c2;
}

.grip {
    width: 9px;
    height: 8px;
    margin-right: 1px;
    stroke: #777;
}

.prompt {
    flex: 1;
}

.cplane {
    display: flex;
    align-items: center;
    width: 44px;
    height: 11px;
    margin-right: 8px;
    padding: 0 4px;
    border: 1px solid #999;
    border-radius: 3px;
}

.cplane select {
    flex: 1;
}

.cplane svg {
    width: 5px;
    height: 9px;
    stroke: #777;
}

.coord + .coord {
    margin-left: 15px;
}
```
